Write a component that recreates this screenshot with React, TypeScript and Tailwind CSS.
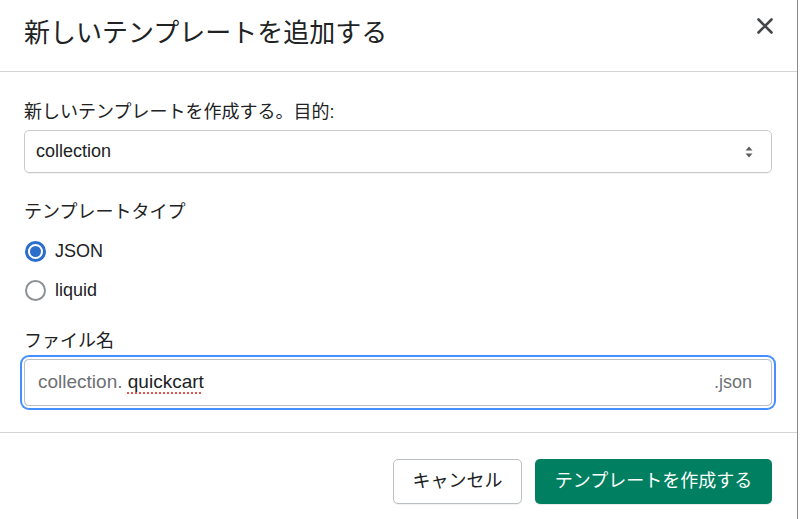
const font = {
  fontFamily: '"Liberation Sans", "Noto Sans CJK JP", sans-serif',
};

function Radio({ label, checked }: { label: string; checked?: boolean }) {
  return (
    <label className="flex h-6 items-center gap-[9px]">
      {checked ? (
        <span className="ml-px flex h-[21px] w-[21px] items-center justify-center rounded-full border-[3px] border-[#2c6ecb]">
          <span className="h-[11px] w-[11px] rounded-full bg-[#2c6ecb]" />
        </span>
      ) : (
        <span className="ml-px h-[21px] w-[21px] rounded-full border-[2.5px] border-[#8c9196]" />
      )}
      <span className="text-[18px] text-[#202223]">{label}</span>
    </label>
  );
}

export default function App() {
  return (
    <div className="h-[519px] w-[800px] overflow-hidden bg-white" style={font}>
      <div className="h-full w-[798px] border-r border-[#8b8b8b]">
        {/* Header */}
        <div className="flex h-[72px] items-center justify-between border-b border-[#d2d5d8] pl-6 pr-[24px]">
          <h1 className="-mt-[4px] text-[26px] font-normal text-[#202223]">
            新しいテンプレートを追加する
          </h1>
          <button className="-mt-[19px] text-[#44474a]">
            <svg width="16" height="16" viewBox="0 0 16 16" fill="none">
              <path d="M1.5 1.5l13 13M14.5 1.5l-13 13" stroke="currentColor" strokeWidth="2.6" strokeLinecap="round" />
            </svg>
          </button>
        </div>

        {/* Body */}
        <div className="flex flex-col border-b border-[#d2d5d8] pl-6 pr-[25px] pb-[26px] pt-[28px] text-[18px] text-[#202223]">
          <div className="leading-6">新しいテンプレートを作成する。目的:</div>
          <div className="mt-[6px] flex h-[43px] items-center justify-between rounded-[5px] border border-[#c9cccf] pl-[11px] pr-[18px] shadow-[0_1px_0_rgba(0,0,0,0.05)]">
            <span>collection</span>
            <svg width="8" height="12" viewBox="0 0 8 12">
              <path d="M4 0.5L7.5 4.5H0.5z" fill="#5c5f62" />
              <path d="M4 11.5L7.5 7.5H0.5z" fill="#5c5f62" />
            </svg>
          </div>

          <div className="mt-[27px] leading-6">テンプレートタイプ</div>
          <div className="mt-[15px] flex flex-col gap-[15px]">
            <Radio label="JSON" checked />
            <Radio label="liquid" />
          </div>

          <div className="mt-[27px] leading-6">ファイル名</div>
          <div className="mt-[6px] flex h-[47px] items-center justify-between rounded-[5px] border border-[#babfc3] pl-[13px] pr-[19px] shadow-[0_0_0_2px_#fff,0_0_0_4px_#458fff]">
            <span className="text-[19px]">
              <span className="text-[#6d7175]">collection. </span>
              <span className="underline decoration-[#e0544f] decoration-dotted decoration-2 underline-offset-4">
                quickcart
              </span>
            </span>
            <span className="text-[#6d7175]">.json</span>
          </div>
        </div>

        {/* Footer */}
        <div className="flex justify-end gap-[13px] pl-6 pr-[25px] pt-[26px] text-[18px]">
          <button className="h-[45px] w-[129px] rounded-[5px] border border-[#babfc3] bg-white text-[#202223] shadow-[0_1px_0_rgba(0,0,0,0.05)]">
            キャンセル
          </button>
          <button className="h-[45px] w-[237px] rounded-[5px] bg-[#008060] text-white shadow-[0_1px_0_rgba(0,0,0,0.08)]">
            テンプレートを作成する
          </button>
        </div>
      </div>
    </div>
  );
}
